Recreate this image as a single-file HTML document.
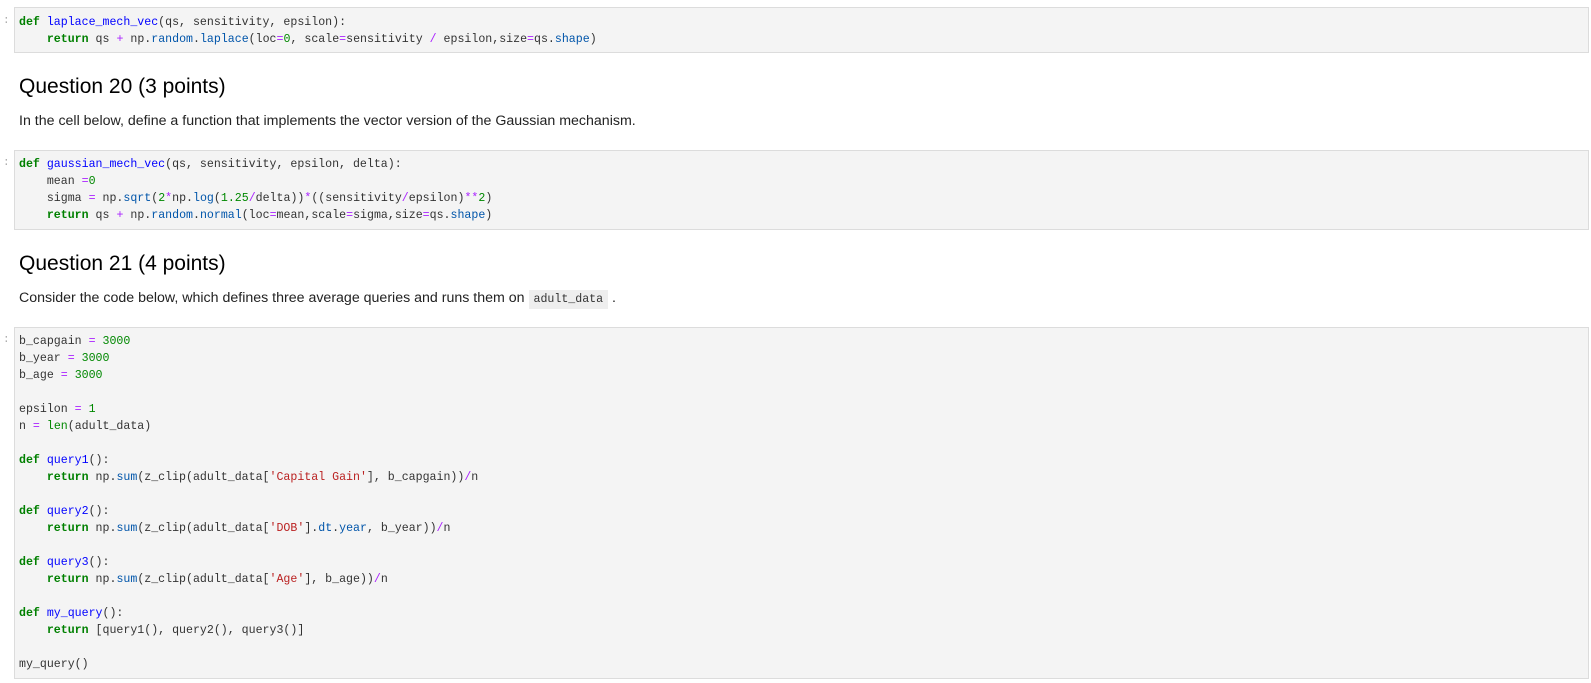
<!DOCTYPE html>
<html><head><style>
body{margin:0;width:1591px;height:683px;background:#fff;position:relative;overflow:hidden;font-family:"Liberation Sans",sans-serif;color:#000}
.cell{position:absolute;left:14px;width:1575px;background:#f4f4f4;border:1px solid #dcdcdc;box-sizing:border-box}
pre{margin:0;position:absolute;left:4px;font-family:"Liberation Mono",monospace;font-size:11.6px;line-height:17px;color:#333}
.p{position:absolute;left:3px;font-family:"Liberation Mono",monospace;font-size:11px;color:#aaa}
.k{color:#008000;font-weight:bold}.f{color:#0000ff}.n{color:#008800}.o{color:#aa22ff}.pr{color:#0055aa}.s{color:#ba2121}
h2{position:absolute;left:19px;margin:0;font-weight:normal;font-size:21px;line-height:24px;color:#000}
.t{position:absolute;left:19px;font-size:14.2px;line-height:17px;color:#222}
code{font-family:"Liberation Mono",monospace;background:#eee;padding:3px 5px;font-size:11.6px;color:#333}
</style></head><body>
<div class="p" style="top:15px">:</div>
<div class="cell" style="top:7px;height:46px"><pre style="top:6px"><span class="k">def</span> <span class="f">laplace_mech_vec</span>(qs, sensitivity, epsilon):
    <span class="k">return</span> qs <span class="o">+</span> np.<span class="pr">random</span>.<span class="pr">laplace</span>(loc<span class="o">=</span><span class="n">0</span>, scale<span class="o">=</span>sensitivity <span class="o">/</span> epsilon,size<span class="o">=</span>qs.<span class="pr">shape</span>)</pre></div>
<h2 style="top:75px">Question 20 (3 points)</h2>
<div class="t" style="top:113px">In the cell below, define a function that implements the vector version of the Gaussian mechanism.</div>
<div class="p" style="top:157px">:</div>
<div class="cell" style="top:150px;height:80px"><pre style="top:5px"><span class="k">def</span> <span class="f">gaussian_mech_vec</span>(qs, sensitivity, epsilon, delta):
    mean <span class="o">=</span><span class="n">0</span>
    sigma <span class="o">=</span> np.<span class="pr">sqrt</span>(<span class="n">2</span><span class="o">*</span>np.<span class="pr">log</span>(<span class="n">1.25</span><span class="o">/</span>delta))<span class="o">*</span>((sensitivity<span class="o">/</span>epsilon)<span class="o">**</span><span class="n">2</span>)
    <span class="k">return</span> qs <span class="o">+</span> np.<span class="pr">random</span>.<span class="pr">normal</span>(loc<span class="o">=</span>mean,scale<span class="o">=</span>sigma,size<span class="o">=</span>qs.<span class="pr">shape</span>)</pre></div>
<h2 style="top:252px">Question 21 (4 points)</h2>
<div class="t" style="top:290px">Consider the code below, which defines three average queries and runs them on <code>adult_data</code> .</div>
<div class="p" style="top:334px">:</div>
<div class="cell" style="top:327px;height:352px"><pre style="top:5px">b_capgain <span class="o">=</span> <span class="n">3000</span>
b_year <span class="o">=</span> <span class="n">3000</span>
b_age <span class="o">=</span> <span class="n">3000</span>

epsilon <span class="o">=</span> <span class="n">1</span>
n <span class="o">=</span> <span class="n">len</span>(adult_data)

<span class="k">def</span> <span class="f">query1</span>():
    <span class="k">return</span> np.<span class="pr">sum</span>(z_clip(adult_data[<span class="s">'Capital Gain'</span>], b_capgain))<span class="o">/</span>n

<span class="k">def</span> <span class="f">query2</span>():
    <span class="k">return</span> np.<span class="pr">sum</span>(z_clip(adult_data[<span class="s">'DOB'</span>].<span class="pr">dt</span>.<span class="pr">year</span>, b_year))<span class="o">/</span>n

<span class="k">def</span> <span class="f">query3</span>():
    <span class="k">return</span> np.<span class="pr">sum</span>(z_clip(adult_data[<span class="s">'Age'</span>], b_age))<span class="o">/</span>n

<span class="k">def</span> <span class="f">my_query</span>():
    <span class="k">return</span> [query1(), query2(), query3()]

my_query()</pre></div>
</body></html>
